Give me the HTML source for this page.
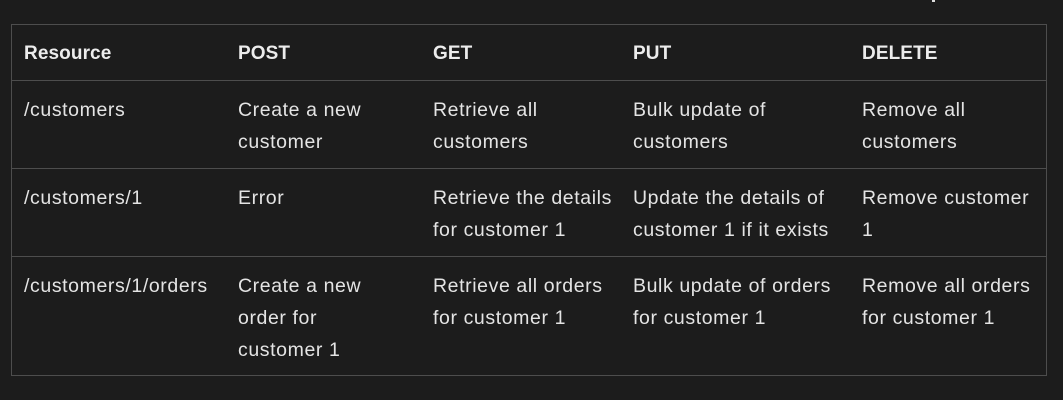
<!DOCTYPE html>
<html><head><style>
html,body{margin:0;padding:0;background:#1c1c1c;width:1063px;height:400px;overflow:hidden}
.t{position:absolute;left:11px;top:24px;width:1036px;height:352px;border:1px solid #4d4d4d;box-sizing:border-box}
.r{position:absolute;left:0;width:100%;border-bottom:1px solid #4d4d4d;box-sizing:border-box}
.c{position:absolute;font-family:"Liberation Sans",sans-serif;font-size:19.5px;letter-spacing:0.6px;line-height:32px;color:#e4e4e4;white-space:nowrap}
.h .c{font-weight:bold;color:#ececec;font-size:19px;letter-spacing:0.1px}
.mark{position:absolute;left:932px;top:0;width:3px;height:2px;background:#ddd}
</style></head><body>
<div class="mark"></div>
<div class="t">
<div class="r h" style="top:0;height:56px">
<div class="c" style="left:12px;top:13px">Resource</div><div class="c" style="left:226px;top:13px">POST</div><div class="c" style="left:421px;top:13px">GET</div><div class="c" style="left:621px;top:13px">PUT</div><div class="c" style="left:850px;top:13px">DELETE</div></div>
<div class="r" style="top:56px;height:88px">
<div class="c" style="left:12px;top:13px">/customers</div><div class="c" style="left:226px;top:13px">Create a new<br>customer</div><div class="c" style="left:421px;top:13px">Retrieve all<br>customers</div><div class="c" style="left:621px;top:13px">Bulk update of<br>customers</div><div class="c" style="left:850px;top:13px">Remove all<br>customers</div></div>
<div class="r" style="top:144px;height:88px">
<div class="c" style="left:12px;top:13px">/customers/1</div><div class="c" style="left:226px;top:13px">Error</div><div class="c" style="left:421px;top:13px">Retrieve the details<br>for customer 1</div><div class="c" style="left:621px;top:13px">Update the details of<br>customer 1 if it exists</div><div class="c" style="left:850px;top:13px">Remove customer<br>1</div></div>
<div class="r" style="top:232px;height:118px;border-bottom:none">
<div class="c" style="left:12px;top:13px">/customers/1/orders</div><div class="c" style="left:226px;top:13px">Create a new<br>order for<br>customer 1</div><div class="c" style="left:421px;top:13px">Retrieve all orders<br>for customer 1</div><div class="c" style="left:621px;top:13px">Bulk update of orders<br>for customer 1</div><div class="c" style="left:850px;top:13px">Remove all orders<br>for customer 1</div></div>
</div>
</body></html>
